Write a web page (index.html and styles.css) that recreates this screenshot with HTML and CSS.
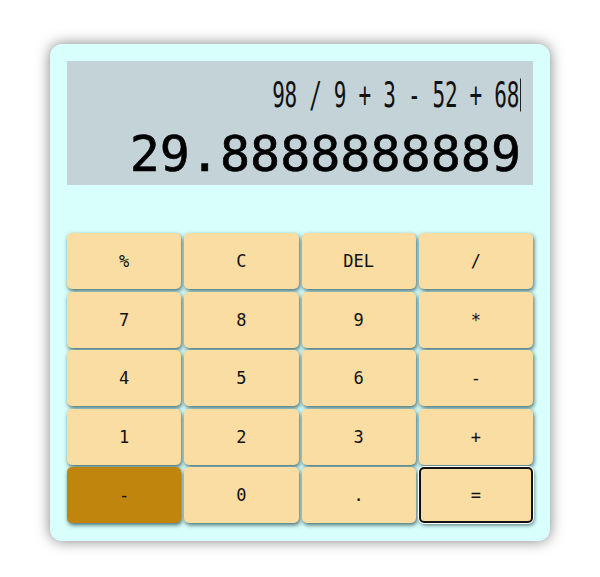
FILE: index.html
```html
<!DOCTYPE html>
<html>
<head>
<meta charset="utf-8">
<link rel="stylesheet" href="styles.css">
</head>
<body>
<div class="calc">
  <div class="display">
    <div class="expr"><span class="expr-text">98 / 9 + 3 - 52 + 68</span><span class="caret"></span></div>
    <div class="result">29.8888888889</div>
  </div>
  <div class="keys">
    <button class="key">%</button>
    <button class="key">C</button>
    <button class="key">DEL</button>
    <button class="key">/</button>
    <button class="key">7</button>
    <button class="key">8</button>
    <button class="key">9</button>
    <button class="key">*</button>
    <button class="key">4</button>
    <button class="key">5</button>
    <button class="key">6</button>
    <button class="key">-</button>
    <button class="key">1</button>
    <button class="key">2</button>
    <button class="key">3</button>
    <button class="key">+</button>
    <button class="key key-active">-</button>
    <button class="key">0</button>
    <button class="key">.</button>
    <button class="key key-equals">=</button>
  </div>
</div>
</body>
</html>
```
FILE: styles.css
```css
html, body {
  margin: 0;
  padding: 0;
  background: #ffffff;
}
body {
  width: 600px;
  height: 577px;
  font-family: "DejaVu Sans Mono", monospace;
}
.calc {
  position: relative;
  top: 44px;
  margin-left: 50px;
  width: 500px;
  height: 497px;
  box-sizing: border-box;
  padding: 17px;
  background: #d9fffc;
  border-radius: 12px;
  box-shadow: 0 0 14px rgba(0, 0, 0, 0.5);
}
.display {
  height: 124px;
  background: #c4d3d7;
  box-sizing: border-box;
  padding: 0 12px 0 0;
  display: flex;
  flex-direction: column;
  align-items: flex-end;
}
.expr {
  margin-top: 16px;
  height: 36px;
  display: flex;
  align-items: center;
  transform: scaleY(1.65);
  transform-origin: right center;
}
.expr-text {
  font-family: "DejaVu Sans Mono", monospace;
  font-size: 21px;
  color: #111;
  letter-spacing: -0.3px;
}
.caret {
  display: inline-block;
  width: 1px;
  height: 20px;
  background: #222;
  margin-left: 1px;
}
.result {
  margin-top: 13px;
  font-family: "DejaVu Sans Mono", monospace;
  font-size: 50px;
  line-height: 56px;
  color: #000;
  -webkit-text-stroke: 0.6px #000;
}
.keys {
  margin-top: 48px;
  display: grid;
  grid-template-columns: repeat(4, 1fr);
  grid-auto-rows: 56px;
  column-gap: 3px;
  row-gap: 2.5px;
}
.key {
  border: none;
  background: #f9dda3;
  border-radius: 5px;
  box-shadow: 1px 2px 4px rgba(40, 80, 85, 0.85);
  font-family: "DejaVu Sans Mono", monospace;
  font-size: 17px;
  color: #111;
  padding: 0;
}
.key-active {
  background: #c0850d;
}
.key-equals {
  border: 2px solid #111;
  box-shadow: 0 0 0 1px #fff, 1px 2px 4px rgba(40, 80, 85, 0.85);
}
```
